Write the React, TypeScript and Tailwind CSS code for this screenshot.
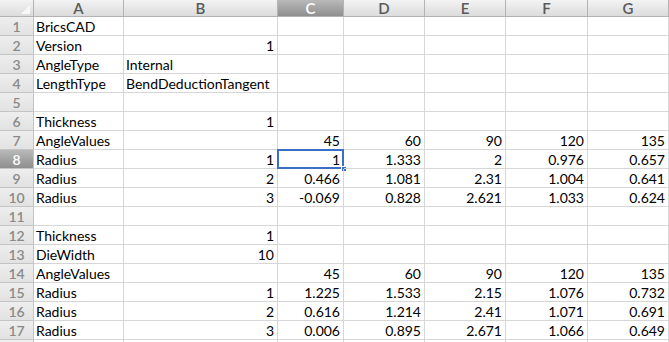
type Cell = string | number | null;

const cols = ["A", "B", "C", "D", "E", "F", "G"];
const widths = ["w-[90px]", "w-[154px]", "w-[66px]", "w-[81px]", "w-[81px]", "w-[82px]", "w-[81px]"];

const rows: Cell[][] = [
  ["BricsCAD"],
  ["Version", 1],
  ["AngleType", "Internal"],
  ["LengthType", "BendDeductionTangent"],
  [],
  ["Thickness", 1],
  ["AngleValues", null, 45, 60, 90, 120, 135],
  ["Radius", 1, 1, 1.333, 2, 0.976, 0.657],
  ["Radius", 2, 0.466, 1.081, 2.31, 1.004, 0.641],
  ["Radius", 3, -0.069, 0.828, 2.621, 1.033, 0.624],
  [],
  ["Thickness", 1],
  ["DieWidth", 10],
  ["AngleValues", null, 45, 60, 90, 120, 135],
  ["Radius", 1, 1.225, 1.533, 2.15, 1.076, 0.732],
  ["Radius", 2, 0.616, 1.214, 2.41, 1.071, 0.691],
  ["Radius", 3, 0.006, 0.895, 2.671, 1.066, 0.649],
];

function HeaderCell({ label, active }: { label: string; active: boolean }) {
  return (
    <div
      className={`flex h-[17px] shrink-0 items-center justify-center border-r border-b border-[#b3b3b3] text-[15px] font-semibold ${
        active ? "bg-gradient-to-b from-[#b9b9b9] to-[#8f8f8f] text-white" : "bg-gradient-to-b from-[#f3f3f3] to-[#dcdcdc] text-[#5a5a5a]"
      }`}
    >
      {label}
    </div>
  );
}

export default function App() {
  return (
    <div className="h-[342px] w-[669px] overflow-hidden bg-white font-['Lato','Open_Sans',sans-serif] text-[14px] text-black">
      <div className="flex">
        <div className="relative h-[17px] w-[34px] shrink-0 border-r border-b border-[#b3b3b3] bg-gradient-to-b from-[#f3f3f3] to-[#dcdcdc]">
          <div className="absolute right-[3px] bottom-[2px] h-0 w-0 border-b-[9px] border-l-[9px] border-b-[#f8f8f8] border-l-transparent" />
        </div>
        {cols.map((c, i) => (
          <div key={c} className={widths[i]}>
            <HeaderCell label={c} active={c === "C"} />
          </div>
        ))}
      </div>
      {rows.map((row, r) => (
        <div key={r} className="flex h-[19px]">
          <div
            className={`flex w-[34px] shrink-0 items-center justify-center border-r border-b border-[#c4c4c4] text-[14px] font-semibold ${
              r === 7 ? "bg-gradient-to-b from-[#b9b9b9] to-[#8f8f8f] text-white" : "bg-gradient-to-b from-[#eeeeee] to-[#e2e2e2] text-[#8a8a8a]"
            }`}
          >
            {r + 1}
          </div>
          {cols.map((c, i) => {
            const v = row[i];
            const isNum = typeof v === "number";
            const selected = r === 7 && c === "C";
            return (
              <div
                key={c}
                className={`relative flex shrink-0 items-center overflow-visible whitespace-nowrap border-r border-b border-[#d6d6d6] ${widths[i]} ${
                  isNum ? "justify-end pr-[3px]" : "pl-[2px]"
                }`}
              >
                {v ?? ""}
                {selected && (
                  <>
                    <div className="absolute top-[-1px] left-[-1px] h-[20px] w-[67px] border-2 border-[#3b6fc6]" />
                    <div className="absolute right-[-4px] bottom-[-4px] h-[6px] w-[6px] border border-white bg-[#3b6fc6]" />
                  </>
                )}
              </div>
            );
          })}
        </div>
      ))}
      <div className="flex h-[19px]">
        <div className="w-[34px] shrink-0 border-r border-[#c4c4c4] bg-[#eeeeee]" />
        {cols.map((c, i) => (
          <div key={c} className={`shrink-0 border-r border-[#d6d6d6] ${widths[i]}`} />
        ))}
      </div>
    </div>
  );
}
